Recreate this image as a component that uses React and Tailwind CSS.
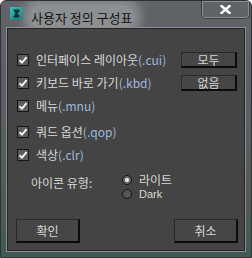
import React from "react";

const KR = { fontFamily: '"Noto Sans CJK KR", "Noto Sans", sans-serif' };

function Check() {
  return (
    <div className="w-[12px] h-[12px] shrink-0 border border-[#161616] bg-[#5c5c5c] flex items-center justify-center">
      <svg width="10" height="10" viewBox="0 0 10 10">
        <path d="M1.5 5.2 L4 7.6 L8.6 2.2" fill="none" stroke="#f2f2f2" strokeWidth="2" />
      </svg>
    </div>
  );
}

function Btn({ children, className }) {
  return (
    <div
      className={
        "flex items-center justify-center bg-[#464646] border border-[#2a2a2a] border-r-[#0c0c0c] border-b-[#0c0c0c] border-r-2 border-b-2 text-[12px] text-[#d6d6d6] leading-none " +
        className
      }
      style={KR}
    >
      {children}
    </div>
  );
}

function Row({ label, ext, button, className }) {
  return (
    <div className={"flex items-center h-[16px] pl-[9px] pr-[7px] " + className}>
      <Check />
      <span className="ml-[7px] text-[12px] leading-none text-[#d8d8d8] whitespace-nowrap" style={KR}>
        {label}
        <span className="text-[#9fb9dc]">{ext}</span>
      </span>
      {button && <Btn className="ml-auto w-[56px] h-[16px]">{button}</Btn>}
    </div>
  );
}

export default function App() {
  return (
    <div className="w-[252px] h-[258px] flex flex-col border border-[#2f3235] rounded-t-[6px] bg-[linear-gradient(180deg,#606468_0%,#5b5f63_45%,#4f5a52_80%,#3f5a55_100%)] overflow-hidden">
      {/* title bar */}
      <div className="h-[26px] shrink-0 flex items-start">
        <div className="mt-[6px] ml-[9px] w-[13px] h-[13px] shrink-0">
          <svg width="13" height="13" viewBox="0 0 13 13">
            <defs>
              <linearGradient id="ig" x1="0" y1="0" x2="1" y2="1">
                <stop offset="0" stopColor="#3fc6c0" />
                <stop offset="1" stopColor="#0d6f6c" />
              </linearGradient>
            </defs>
            <rect x="0" y="0" width="13" height="13" fill="url(#ig)" />
            <path d="M3 2.5 H9 L10 4 L7.5 6.5 L10 9 L9 10.5 H3 L5.5 6.5 Z" fill="#0b2e33" />
          </svg>
        </div>
        <div className="mt-[4px] ml-[7px] rounded-[10px] bg-[rgba(196,198,200,0.45)] shadow-[0_0_10px_7px_rgba(196,198,200,0.42)] px-[1px]">
          <span className="text-[13px] leading-[17px] text-[#141414] whitespace-nowrap" style={KR}>
            사용자 정의 구성표
          </span>
        </div>
        <div className="ml-auto mr-[1px] w-[49px] h-[18px] rounded-b-[5px] border border-t-0 border-[#3a3d40] shadow-[inset_0_0_0_1px_#8c9094] flex items-center justify-center">
          <svg width="11" height="9" viewBox="0 0 11 9">
            <path d="M1.5 1 L9.5 8 M9.5 1 L1.5 8" stroke="#ffffff" strokeWidth="2.4" strokeLinecap="square" />
          </svg>
        </div>
      </div>

      {/* client */}
      <div className="flex-1 ml-[5px] mr-[5px] mb-[5px] mt-[0px] border border-[#8d9093]">
        <div className="h-full border border-[#262626] bg-[#444444] flex flex-col">
          <Row className="mt-[23px]" label="인터페이스 레이아웃" ext="(.cui)" button="모두" />
          <Row className="mt-[7px]" label="키보드 바로 가기" ext="(.kbd)" button="없음" />
          <Row className="mt-[7px]" label="메뉴" ext="(.mnu)" />
          <Row className="mt-[10px]" label="쿼드 옵션" ext="(.qop)" />
          <Row className="mt-[7px]" label="색상" ext="(.clr)" />

          <div className="mt-[10px] flex items-start pl-[23px]">
            <span className="mt-[3px] w-[91px] text-[12px] leading-[14px] text-[#d8d8d8]" style={KR}>
              아이콘 유형:
            </span>
            <div className="flex flex-col">
              <div className="h-[14px] flex items-center">
                <div className="w-[10px] h-[10px] rounded-full border border-[#111] bg-[#6a6a6a] flex items-center justify-center">
                  <div className="w-[4px] h-[4px] rounded-full bg-[#f0f0f0]" />
                </div>
                <span className="ml-[7px] text-[12px] leading-none text-[#d8d8d8]" style={KR}>
                  라이트
                </span>
              </div>
              <div className="h-[14px] flex items-center">
                <div className="w-[10px] h-[10px] rounded-full border border-[#111] bg-[#575757]" />
                <span
                  className="ml-[7px] text-[11px] leading-none text-[#dcd8c8]"
                  style={{ fontFamily: '"Liberation Sans", Arial, sans-serif' }}
                >
                  Dark
                </span>
              </div>
            </div>
          </div>

          <div className="mt-auto mb-[7px] flex justify-between pl-[8px] pr-[6px]">
            <Btn className="w-[64px] h-[24px]">확인</Btn>
            <Btn className="w-[64px] h-[24px]">취소</Btn>
          </div>
        </div>
      </div>
    </div>
  );
}
